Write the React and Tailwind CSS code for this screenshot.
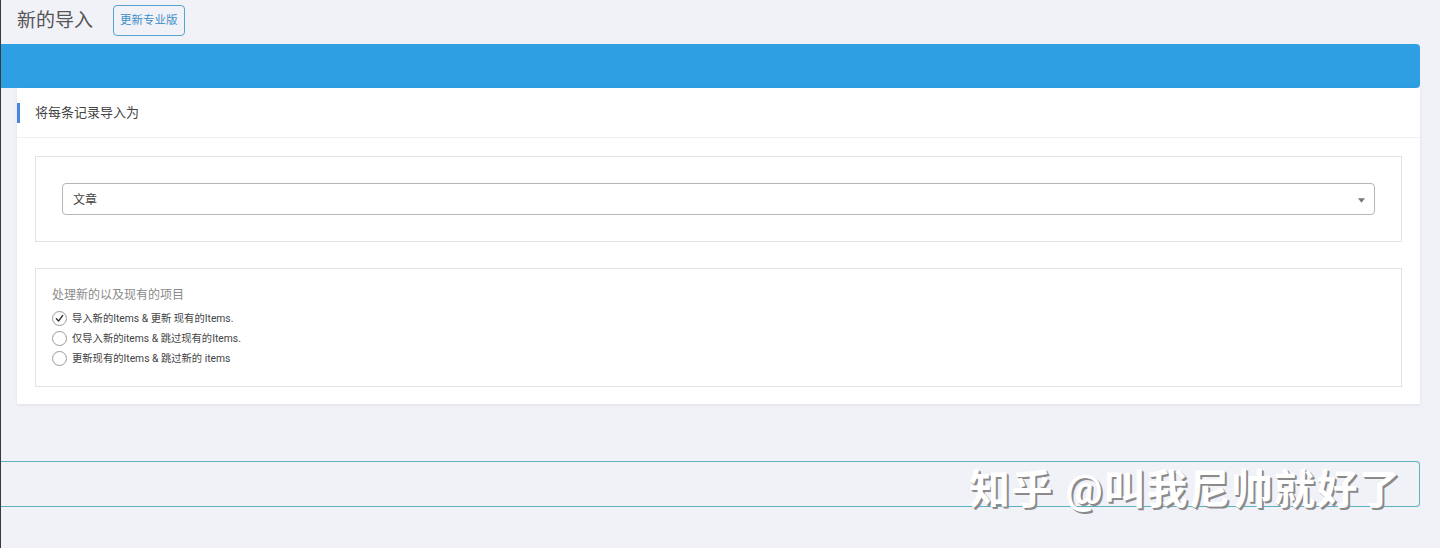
import React from "react";

const OPTIONS = [
  { id: 1, label: "导入新的Items & 更新 现有的Items.", checked: true },
  { id: 2, label: "仅导入新的items & 跳过现有的Items.", checked: false },
  { id: 3, label: "更新现有的Items & 跳过新的 items", checked: false },
];

const Radio = ({ checked }) => (
  <span className="flex h-[15px] w-[15px] shrink-0 items-center justify-center rounded-full border-[1.5px] border-[#9a9a9a] bg-white">
    {checked && (
      <svg width="9" height="9" viewBox="0 0 10 10" fill="none">
        <path d="M1.5 5.2 L4 7.8 L8.6 1.6" stroke="#333" strokeWidth="1.5" strokeLinecap="round" strokeLinejoin="round" />
      </svg>
    )}
  </span>
);

const App = () => {
  return (
    <div className="relative h-[548px] overflow-hidden border-l border-[#3a3a3a] bg-[#f1f1f8] font-['Roboto','Noto_Sans_CJK_SC',sans-serif] text-[#444]">
      {/* Title row */}
      <div className="flex h-[44px] items-center gap-[20px] pl-[16px] pb-[3px]">
        <h1 className="text-[19px] leading-none text-[#555]">新的导入</h1>
        <button className="h-[31px] rounded-[4px] border border-[#5aa3cf] px-[6px] text-[11.5px] text-[#3b8fc8]">
          更新专业版
        </button>
      </div>

      {/* Blue bar */}
      <div className="mr-[20px] h-[44px] rounded-r-[4px] bg-[#2f9fe3]" />

      {/* Main card */}
      <div className="ml-[16px] mr-[20px] bg-white shadow-[0_1px_3px_rgba(0,0,0,0.08)]">
        <div className="flex h-[50px] items-center border-b border-[#f0f0f2]">
          <span className="h-[20px] w-[3px] bg-[#4a86e0]" />
          <span className="pl-[15px] text-[13px] text-[#444]">将每条记录导入为</span>
        </div>

        <div className="px-[18px] pt-[18px] pb-[17px]">
          <div className="flex h-[86px] items-center border border-[#e2e2e4] px-[26px]">
            <div className="flex h-[32px] w-full items-center justify-between rounded-[4px] border border-[#b5b5b5] pl-[10px] pr-[9px] pt-[2px]">
              <span className="text-[12px] text-[#444]">文章</span>
              <svg width="7" height="5" viewBox="0 0 8 5">
                <path d="M0 0 H8 L4 5 Z" fill="#777" />
              </svg>
            </div>
          </div>

          <div className="mt-[26px] flex flex-col border border-[#e2e2e4] px-[16px] pt-[18px] pb-[20px]">
            <p className="text-[12px] leading-[16px] text-[#8a8a8a]">处理新的以及现有的项目</p>
            <div className="mt-[8px] flex flex-col gap-[5px]">
              {OPTIONS.map((o) => (
                <label key={o.id} className="flex h-[15px] items-center gap-[5px] text-[10.3px] text-[#444]">
                  <Radio checked={o.checked} />
                  <span>{o.label}</span>
                </label>
              ))}
            </div>
          </div>
        </div>
      </div>

      {/* Bottom bar */}
      <div className="mt-[57px] mr-[20px] h-[46px] rounded-r-[4px] border border-l-0 border-[#5cb3bd]" />

      {/* Watermark */}
      <div className="absolute left-[968px] top-[466px] text-[41px] font-bold leading-[48px] tracking-[1.5px] text-white [text-shadow:2px_2px_0_#8a8a8a,1px_1px_0_#aaa]">
        知乎 @叫我尼帅就好了
      </div>
    </div>
  );
};

export default App;
